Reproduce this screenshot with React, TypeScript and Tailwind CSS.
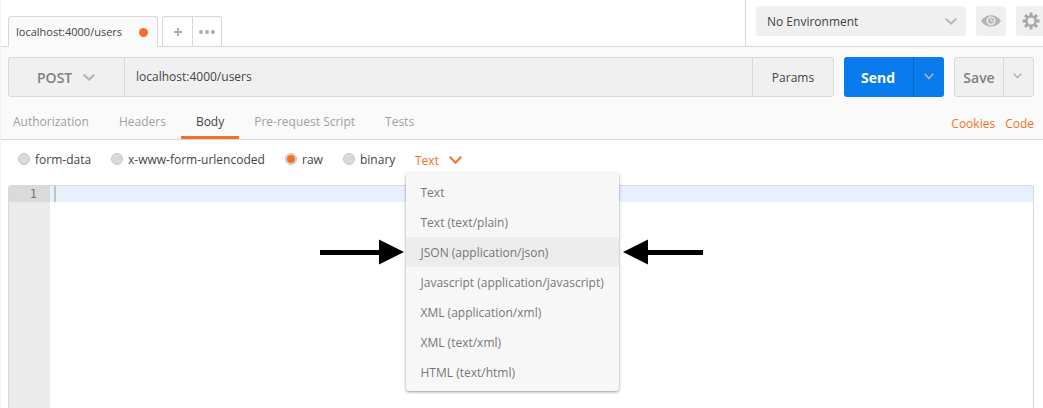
import React from "react";

const TABS = ["Authorization", "Headers", "Body", "Pre-request Script", "Tests"];
const FORMATS = [
  "Text",
  "Text (text/plain)",
  "JSON (application/json)",
  "Javascript (application/javascript)",
  "XML (application/xml)",
  "XML (text/xml)",
  "HTML (text/html)",
];

function Chevron({ className, w = 12, h = 7, stroke = 2 }: { className: string; w?: number; h?: number; stroke?: number }) {
  return (
    <svg width={w} height={h} viewBox={`0 0 ${w} ${h}`} className={`shrink-0 ${className}`} fill="none" stroke="currentColor" strokeWidth={stroke}>
      <path d={`M.7 .7L${w / 2} ${h - 1.4}L${w - 0.7} .7`} />
    </svg>
  );
}

function EyeIcon() {
  return (
    <svg width="20" height="12" viewBox="0 0 20 12">
      <path d="M0 6C4.500-1.600 15.500-1.600 20 6C15.500 13.400 4.500 13.400 0 6Z" fill="#b5b5b5" />
      <circle cx="10" cy="5.800" r="4.400" fill="#f0f0f0" />
      <circle cx="10" cy="5.800" r="3" fill="#b5b5b5" />
      <path d="M10 4v2h2" fill="none" stroke="#f0f0f0" strokeWidth="1" />
    </svg>
  );
}

function GearIcon() {
  return (
    <svg width="18" height="18" viewBox="-9 -9 18 18">
      {[0, 45, 90, 135].map((a) => (
        <path key={a} d="M-1.400-8.500h2.800l.4 4v9l-.4 4h-2.800l-.4-4v-9z" fill="#a9a9a9" transform={`rotate(${a})`} />
      ))}
      <circle r="5.800" fill="#a9a9a9" />
      <circle r="3.400" fill="#f0f0f0" />
    </svg>
  );
}

function Radio({ label, checked, className }: { label: string; checked?: boolean; className: string }) {
  return (
    <div className={`flex shrink-0 items-center ${className}`}>
      <span className="mb-px flex size-3 shrink-0 items-center justify-center rounded-full border border-[#c6c6c6] bg-[#dadada]">
        {checked && <span className="size-2 shrink-0 rounded-full bg-[#f47023]" />}
      </span>
      <span className="ml-[5px]">{label}</span>
    </div>
  );
}

export default function App() {
  return (
    <div className="relative flex h-[408px] w-[1043px] flex-col overflow-hidden border-l border-[#f3f3f3] bg-white font-['Open_Sans',sans-serif] text-[12px] leading-4 whitespace-nowrap text-[#444444]">
      <header className="flex h-[47px] shrink-0">
        <div className="w-[7px] shrink-0 border-b border-[#d8d8d8]" />
        <div className="mt-4 flex w-[150px] shrink-0 items-center justify-between rounded-t-[3px] border border-b-0 border-[#d8d8d8] bg-[#fafafa] pr-[9px] pl-[7px] text-[11px]">
          <span>localhost:4000/users</span>
          <span className="size-[9px] rounded-full bg-[#f47023]" />
        </div>
        <div className="flex w-[587px] shrink-0 border-b border-[#d8d8d8] pt-4 pl-1">
          <div className="flex h-[30px] w-[60px] rounded-t-[3px] border border-b-0 border-[#d8d8d8]">
            <div className="flex w-[30px] items-center justify-center border-r border-[#d8d8d8]">
              <svg width="8" height="8" stroke="#adadad" strokeWidth="2"><path d="M4 0v8M0 4h8" /></svg>
            </div>
            <div className="flex flex-1 items-center justify-center gap-[2px]">
              {[0, 1, 2].map((i) => <span key={i} className="size-1 rounded-full bg-[#adadad]" />)}
            </div>
          </div>
        </div>
        <div className="flex w-[310px] shrink-0 gap-[10px] border-b border-l border-[#d8d8d8] pt-[6px] pl-[10px]">
          <div className="flex h-[30px] w-[210px] shrink-0 items-center justify-between rounded-[3px] bg-[#f0f0f0] pr-[9px] pl-[11px]">
            <span className="pt-[2px]">No Environment</span>
            <Chevron className="text-[#b9b9b9]" />
          </div>
          <div className="flex size-[30px] shrink-0 items-center justify-center rounded-[3px] bg-[#f0f0f0]"><EyeIcon /></div>
          <div className="flex size-[30px] shrink-0 items-center justify-center rounded-[3px] bg-[#f0f0f0]"><GearIcon /></div>
        </div>
      </header>

      <section className="flex h-[93px] shrink-0 flex-col border-b border-[#d8d8d8] bg-[#fafafa]">
        <div className="flex h-[50px] pt-[10px] pl-[7px]">
          <div className="flex w-[826px] shrink-0 overflow-hidden rounded-[3px] border border-[#d8d8d8] bg-[#f0f0f0]">
            <div className="flex w-[116px] items-center border-r border-[#d8d8d8] pl-7 text-[14px] font-semibold text-[#808080]">
              <span className="w-[35px] pt-px">POST</span>
              <Chevron className="ml-[11px] text-[#b3b3b3]" />
            </div>
            <div className="flex flex-1 items-center pl-[11px]">localhost:4000/users</div>
            <div className="flex w-[81px] items-center justify-center border-l border-[#d8d8d8] pt-[2px]">Params</div>
          </div>
          <div className="ml-[10px] flex w-[100px] shrink-0 rounded-[3px] bg-[#097bed] text-[14px] font-bold text-white">
            <div className="flex w-[70px] items-center justify-center border-r border-[#0869cb]"><span className="pt-px pr-px">Send</span></div>
            <div className="flex flex-1 items-center justify-center pb-[2px]"><Chevron className="text-[#a9b5c5]" w={10} h={7} stroke={1.5} /></div>
          </div>
          <div className="ml-[10px] flex w-[80px] shrink-0 rounded-[3px] border border-[#d8d8d8] bg-[#f0f0f0] text-[14px] font-semibold text-[#808080]">
            <div className="flex w-[49px] items-center justify-center border-r border-[#d8d8d8]"><span className="pt-px">Save</span></div>
            <div className="flex flex-1 items-center justify-center pr-[2px] pb-[2px]"><Chevron className="text-[#b3b3b3]" w={9} h={6} stroke={1.5} /></div>
          </div>
        </div>
        <div className="flex flex-1 items-stretch justify-between pr-[9px]">
          <nav className="-ml-[3px] flex text-[#a0a0a0]">
            {TABS.map((tab) => (
              <div key={tab} className={tab === "Body" ? "border-b-3 border-[#f47023] px-[15px] pt-[17px] text-[#444444]" : "px-[15px] pt-[17px]"}>{tab}</div>
            ))}
          </nav>
          <div className="flex gap-[10px] pt-[19px] text-[#f47023]"><span>Cookies</span><span>Code</span></div>
        </div>
      </section>

      <div className="flex h-[45px] shrink-0 pl-[17px]">
        <div className="flex h-[39px] items-center">
          <Radio label="form-data" className="w-[93px]" />
          <Radio label="x-www-form-urlencoded" className="w-[174px]" />
          <Radio label="raw" checked className="w-[58px]" />
          <Radio label="binary" className="w-[72px]" />
          <div className="flex items-center pt-[2px] text-[#f47023]"><span>Text</span><Chevron className="mb-[2px] ml-[10px]" w={13} h={8} /></div>
        </div>
      </div>

      <main className="mr-[9px] ml-[7px] flex flex-1 overflow-hidden rounded-t-[3px] border border-b-0 border-[#d8d8d8]">
        <div className="w-[41px] shrink-0 bg-[#ebebeb] font-['DejaVu_Sans_Mono',monospace] text-[#777777]">
          <div className="h-4 bg-[#dadada] pr-[13px] text-right">1</div>
        </div>
        <div className="flex h-4 flex-1 bg-[#e7f1fe] pl-1"><span className="w-[2px] bg-[#b9c3cc]" /></div>
      </main>

      <div className="absolute top-[173px] left-[405px] w-[213px] rounded-[3px] bg-[#f7f7f7] py-1 text-[#777777] shadow-[0_1px_3px_rgba(0,0,0,0.42)]">
        {FORMATS.map((f) => (
          <div key={f} className={f.startsWith("JSON") ? "h-[30px] bg-[#ececec] pt-2 pl-[14.5px]" : "h-[30px] pt-2 pl-[14.5px]"}>{f}</div>
        ))}
      </div>
      <svg className="absolute top-[239px] left-[319px]" width="85" height="26"><path d="M0 11H59V.5L84 13L59 25.500V16H0Z" /></svg>
      <svg className="absolute top-[239px] left-[622px]" width="81" height="26"><path d="M0 13L25 .5V11H80V16H25V25.500Z" /></svg>
    </div>
  );
}
